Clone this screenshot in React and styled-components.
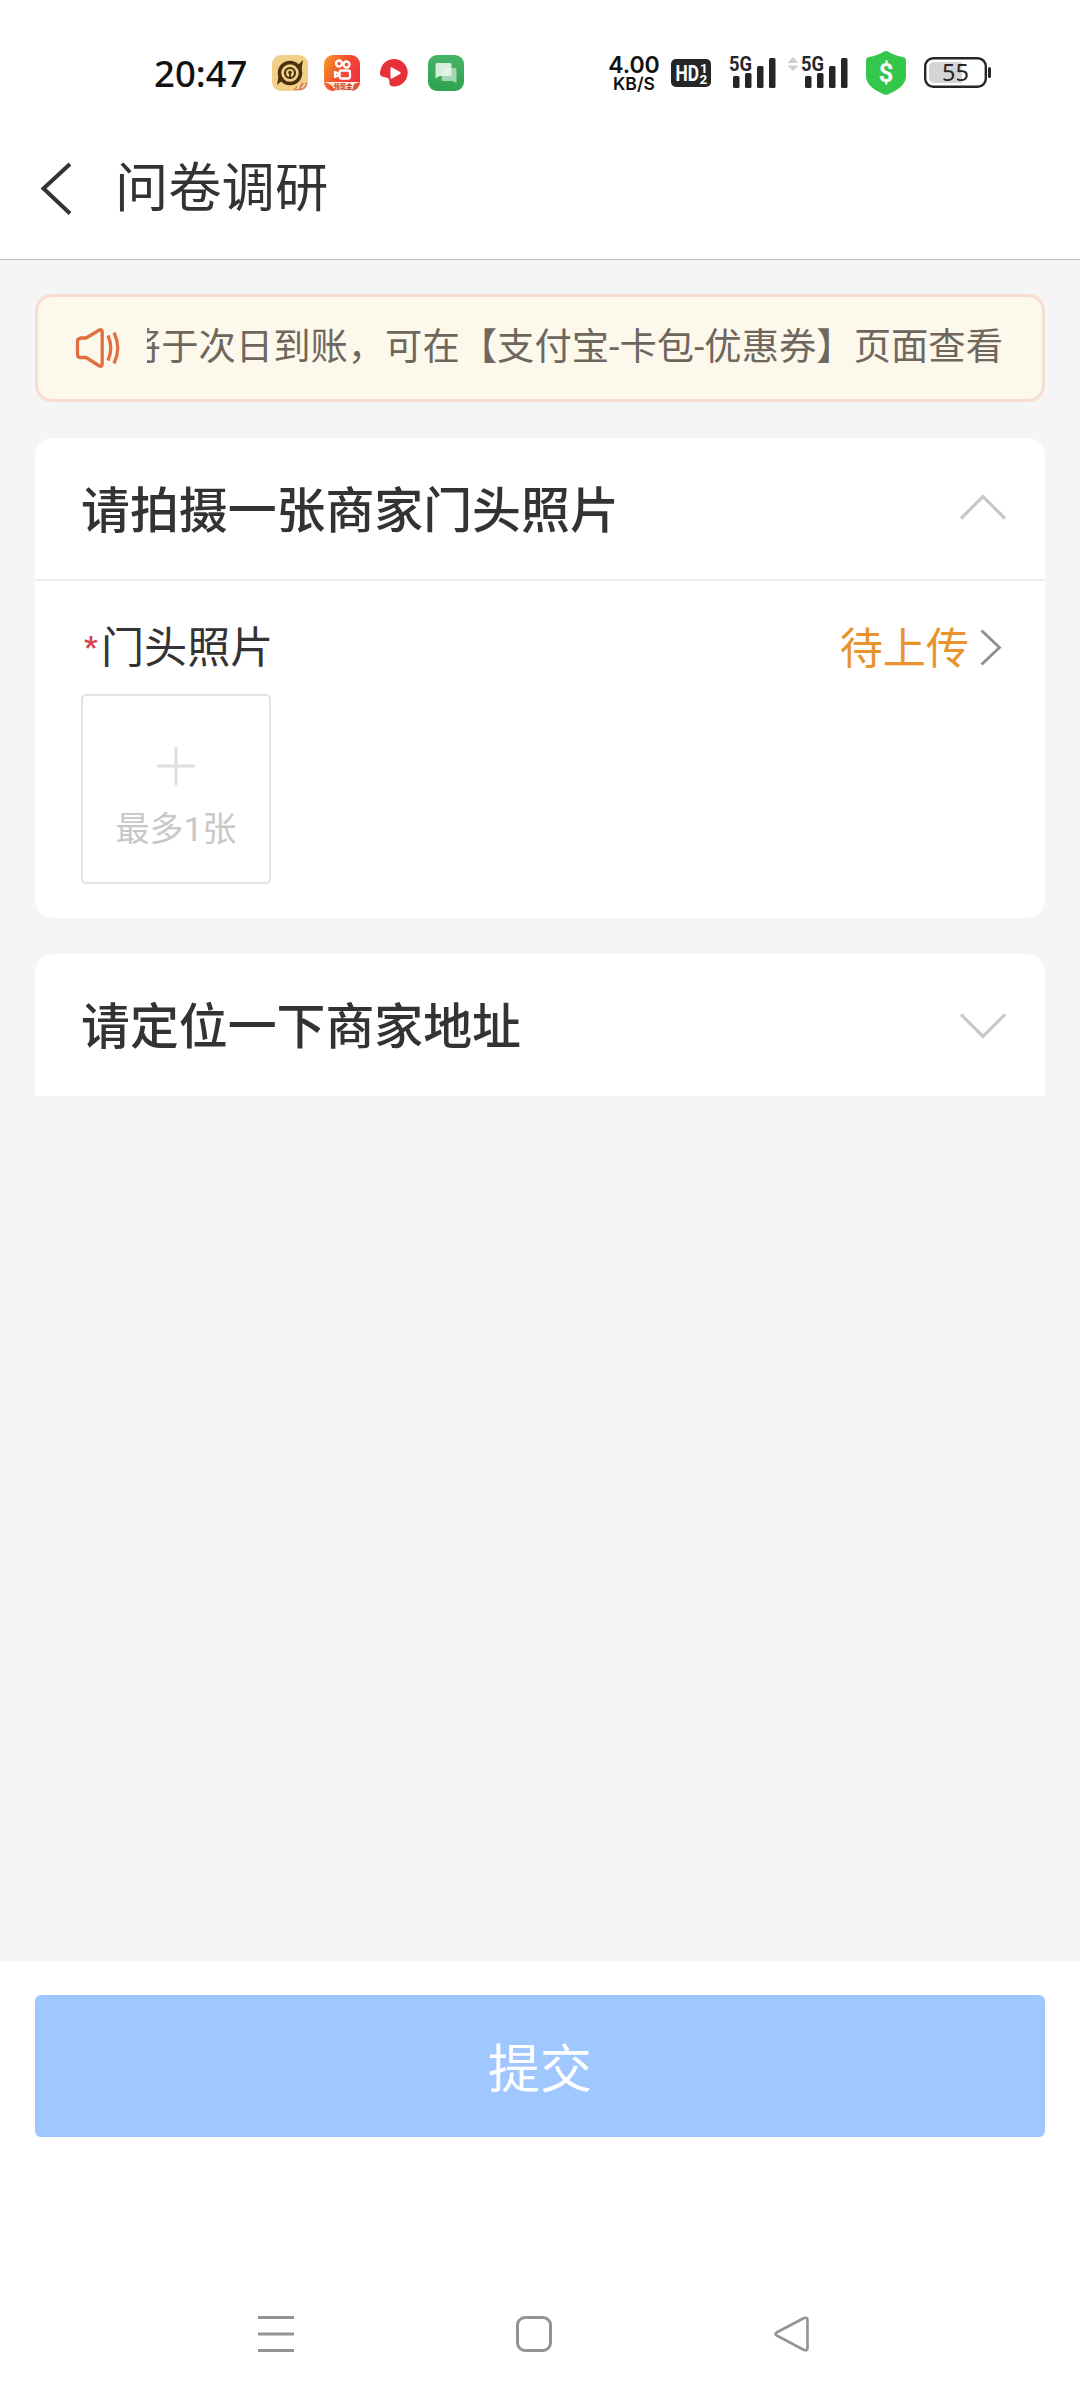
import React from "react";
import styled, { createGlobalStyle } from "styled-components";

const GlobalStyle = createGlobalStyle`
  * {
    box-sizing: border-box;
  }
  body {
    margin: 0;
    background: #fff;
    font-family: Roboto, "Noto Sans CJK SC", sans-serif;
    color: #333;
  }
  svg {
    display: block;
    flex-shrink: 0;
    overflow: visible;
  }
`;

const Page = styled.div`
  display: flex;
  flex-direction: column;
  width: 1080px;
  height: 2400px;
  background: #fff;
  overflow: hidden;
`;

const StatusBar = styled.div`
  display: flex;
  align-items: center;
  height: 120px;
  padding: 25px 89px 0 154px;
`;

const Clock = styled.div`
  width: 118px;
  padding-top: 1px;
  font: 500 36.5px/50px "Noto Sans", sans-serif;
  color: #111;
  white-space: nowrap;
`;

const AppIcons = styled.div`
  display: flex;
  align-items: center;
  gap: 16px;
`;

const StatusRight = styled.div`
  display: flex;
  align-items: center;
  margin-left: auto;
`;

const Spacer = styled.div`
  width: ${(p) => p.$w}px;
`;

const NetSpeed = styled.div`
  width: 54px;
  margin-right: 10px;
  padding-top: 3px;
  text-align: center;
  font-family: Inter, sans-serif;
  font-weight: 600;
  color: #111;
  white-space: nowrap;
`;

const SpeedValue = styled.div`
  font-size: 23px;
  line-height: 20px;
`;

const SpeedUnit = styled.div`
  font-size: 17.5px;
  line-height: 18px;
`;

const Header = styled.header`
  display: flex;
  align-items: center;
  height: 140px;
  padding: 0 40px 2px;
  border-bottom: 1px solid #bdbdbd;
`;

const Title = styled.h1`
  margin: 1px 0 0 43px;
  font-size: 53.3px;
  font-weight: 400;
  line-height: 60px;
`;

const Main = styled.main`
  display: flex;
  flex-direction: column;
  height: 1701px;
  padding: 34px 35px 0;
  background: #f5f5f5;
`;

const Notice = styled.div`
  display: flex;
  align-items: center;
  height: 108px;
  padding: 0 39px 2px 37px;
  border: 3px solid #f6ddcd;
  border-radius: 17px;
  background: #fdf8ec;
`;

const NoticeText = styled.div`
  display: flex;
  justify-content: flex-end;
  flex: 1;
  margin-left: 26px;
  overflow: hidden;
  font-size: 37.35px;
  line-height: 56px;
  color: #6f675d;
  white-space: nowrap;
`;

const Card = styled.section`
  margin-top: 36px;
  border-radius: ${(p) => (p.$open ? "18px" : "18px 18px 0 0")};
  background: #fff;
`;

const CardHeader = styled.div`
  display: flex;
  align-items: center;
  justify-content: space-between;
  height: ${(p) => (p.$open ? "143px" : "142px")};
  padding: 0 39px ${(p) => (p.$open ? "4px" : "0")} 46px;
  border-bottom: ${(p) => (p.$open ? "2px solid #ececec" : "none")};
`;

const CardTitle = styled.h2`
  margin: 0;
  padding-top: ${(p) => (p.$open ? "10px" : "6px")};
  font-size: 48.9px;
  font-weight: 500;
  line-height: 60px;
`;

const CardBody = styled.div`
  height: 337px;
  padding: 37px 43px 0 46px;
`;

const Field = styled.div`
  display: flex;
  align-items: center;
  justify-content: space-between;
  height: 60px;
`;

const Label = styled.div`
  display: flex;
  align-items: center;
  padding-top: 2px;
  font-size: 43.1px;
  line-height: 60px;
`;

const Required = styled.span`
  width: 20px;
  height: 62px;
  padding-left: 3px;
  font-size: 30px;
  font-weight: 700;
  line-height: 58px;
  color: #d9434f;
`;

const Status = styled.div`
  display: flex;
  align-items: center;
  gap: 11px;
  font-size: 43.1px;
  line-height: 60px;
  color: #e8932c;
`;

const StatusLabel = styled.span`
  padding-top: 3px;
`;

const Upload = styled.button`
  display: flex;
  flex-direction: column;
  align-items: center;
  gap: 19px;
  width: 190px;
  height: 190px;
  margin-top: 16px;
  padding: 51px 0 0;
  border: 2px solid #e3e3e3;
  border-radius: 5px;
  background: #fff;
  font-family: inherit;
  font-size: 34px;
  line-height: 50px;
  color: #c8c8c8;
  white-space: nowrap;
`;

const Footer = styled.footer`
  padding: 34px 35px 0;
`;

const Submit = styled.button`
  display: block;
  width: 100%;
  height: 142px;
  padding: 9px 0 0;
  border: none;
  border-radius: 6px;
  background: #a0c7ff;
  font-family: inherit;
  font-size: 52px;
  line-height: 60px;
  color: #fff;
`;

const NavBar = styled.nav`
  display: flex;
  justify-content: space-between;
  margin-top: auto;
  padding: 0 269px 47px 257px;
`;

const RadioIcon = () => (
  <svg width="36" height="36" viewBox="0 0 36 36">
    <rect width="36" height="36" rx="9" fill="#f2cf86" />
    <circle cx="18" cy="18" r="10.5" fill="none" stroke="#4a3010" strokeWidth="3.5" />
    <path d="M31 5l-2 12-5-5zM5 30l2-11 5 5z" fill="#4a3010" />
    <circle cx="18" cy="18" r="5" fill="none" stroke="#4a3010" strokeWidth="2.2" />
    <circle cx="18" cy="17.500" r="1.800" fill="#4a3010" />
    <path d="M18 18v6" stroke="#4a3010" strokeWidth="1.800" />
    <path d="M21 35l4-4 2 2 3-6 2 2 3-2v3a7 7 0 0 1-6 5z" fill="#d98a62" />
    <path d="M25 34l2-2m3 1l3-4" stroke="#fff2d8" strokeWidth="1.200" />
  </svg>
);

const CameraIcon = () => (
  <svg width="36" height="36" viewBox="0 0 36 36">
    <defs>
      <linearGradient id="camBg" x1="0" y1="0" x2="1" y2=".5">
        <stop offset="0" stopColor="#f79a2b" />
        <stop offset=".55" stopColor="#f4502c" />
        <stop offset="1" stopColor="#ef3340" />
      </linearGradient>
      <clipPath id="camClip">
        <rect width="36" height="36" rx="9" />
      </clipPath>
    </defs>
    <g clipPath="url(#camClip)">
      <rect width="36" height="36" fill="url(#camBg)" />
      <g fill="none" stroke="#fff" strokeWidth="2.300">
        <circle cx="15" cy="8.500" r="3" />
        <circle cx="22.500" cy="9.500" r="3" />
        <rect x="15.500" y="15.500" width="10.500" height="8" rx="2" />
        <path d="M15.500 19.500l-4.500-2.500v5z" strokeLinejoin="round" />
      </g>
      <path d="M0 27h36v9H11Q9 29 0 27z" fill="#fff0e4" />
      <path d="M28 36l2-7 6-2v9z" fill="#e2553c" />
      <text x="9.500" y="34" fontSize="6.300" fontWeight="700" fill="#c33426" fontFamily="Noto Sans CJK SC">
        领现金
      </text>
    </g>
  </svg>
);

const PlayIcon = () => (
  <svg width="36" height="36" viewBox="0 0 36 36">
    <path
      d="M4 18C4.500 9.500 10.500 4 18 4a13.700 13.700 0 0 1 0 27.400c-3.500 0-5-1.400-4.600-4.400.4-3-1-4.300-4.400-4.700C5.500 22 3.900 20.500 4 18z"
      fill="#e8303a"
    />
    <path d="M14.500 13.500q0-1.800 1.600-1l8 4.500q1.400 1 0 2l-8 4.500q-1.600.8-1.600-1z" fill="#fff" />
  </svg>
);

const ChatIcon = () => (
  <svg width="36" height="36" viewBox="0 0 36 36">
    <defs>
      <linearGradient id="chatBg" x1="0" y1="0" x2="0" y2="1">
        <stop offset="0" stopColor="#45b368" />
        <stop offset="1" stopColor="#2fa24f" />
      </linearGradient>
    </defs>
    <rect width="36" height="36" rx="9" fill="url(#chatBg)" />
    <path d="M15 13h12a1.500 1.500 0 0 1 1.500 1.500V28l-4-2H15a1.500 1.500 0 0 1-1.500-1.500z" fill="#a5d8b2" />
    <path d="M9 8h13a1.500 1.500 0 0 1 1.500 1.500v10A1.500 1.500 0 0 1 22 21H11.500l-4 2.500v-14A1.500 1.500 0 0 1 9 8z" fill="#e9f5eb" opacity=".9" />
  </svg>
);

const HdIcon = () => (
  <svg width="40" height="28" viewBox="0 0 40 28">
    <rect width="40" height="28" rx="5" fill="#262626" />
    <text x="4.500" y="22" fontSize="22" fontWeight="700" fill="#fff" fontFamily="Roboto" textLength="23.500" lengthAdjust="spacingAndGlyphs">
      HD
    </text>
    <text x="29" y="13.500" fontSize="13.500" fontWeight="700" fill="#fff" fontFamily="Roboto">
      1
    </text>
    <text x="28.500" y="25" fontSize="13.500" fontWeight="700" fill="#fff" fontFamily="Roboto">
      2
    </text>
  </svg>
);

const SignalIcon = () => (
  <svg width="48" height="36" viewBox="0 0 48 36">
    <text x="0" y="16" fontSize="21" fontWeight="700" fill="#262626" fontFamily="Roboto" textLength="23" lengthAdjust="spacingAndGlyphs">
      5G
    </text>
    <g fill="#262626">
      <rect x="4" y="21" width="6.500" height="12" rx="1.500" />
      <rect x="16" y="18" width="6.500" height="15" rx="1.500" />
      <rect x="28" y="11" width="6.500" height="22" rx="1.500" />
      <rect x="40" y="3" width="6.500" height="30" rx="1.500" />
    </g>
  </svg>
);

const DataArrows = () => (
  <svg width="14" height="36" viewBox="0 0 14 36">
    <path d="M2.500 7.500L7 2.500l4.500 5zM2.500 11l4.500 4.500 4.500-4.500z" fill="#cfcfcf" stroke="#cfcfcf" strokeLinejoin="round" />
  </svg>
);

const ShieldIcon = () => (
  <svg width="40" height="44" viewBox="0 0 40 44">
    <path d="M20 0q1 0 2 .6Q29 5 37 6q3 .5 3 3.500V25q0 11-18 18.400-2 .8-4 0Q0 36 0 25V9.500Q0 6.500 3 6 11 5 18 .6 19 0 20 0z" fill="#34c74b" />
    <text x="20" y="31" fontSize="26" fontWeight="700" fill="#fff" fontFamily="Roboto" textAnchor="middle">
      $
    </text>
  </svg>
);

const BatteryIcon = () => (
  <svg width="67" height="31" viewBox="0 0 67 31">
    <rect x="1.200" y="1.200" width="60.600" height="28.600" rx="8" fill="#fff" stroke="#262626" strokeWidth="2.400" />
    <path d="M10 5h28v21H10a5 5 0 0 1-5-5V10a5 5 0 0 1 5-5z" fill="#d5d5d5" />
    <rect x="64" y="10" width="3" height="11" rx="1.500" fill="#262626" />
    <text x="31.500" y="24" fontSize="23.500" fill="#262626" fontFamily="Noto Sans" textAnchor="middle">
      55
    </text>
  </svg>
);

const BackIcon = () => (
  <svg width="32" height="54" viewBox="0 0 32 54">
    <path d="M30 2L3.500 26.500 30 51.500" fill="none" stroke="#333" strokeWidth="4" />
  </svg>
);

const SpeakerIcon = () => (
  <svg width="46" height="42" viewBox="0 0 46 42" fill="none" stroke="#e0703f" strokeWidth="3.300">
    <path
      d="M5.500 12H11L24.500 4q2.700-1 2.700 2v32q0 3-2.700 2L11 31.500H5.500q-3 0-3-3v-13q0-3 3-3z"
      strokeLinejoin="round"
    />
    <path d="M33 9.500q5.500 12.500 0 25" />
    <path d="M39 6.500q7.500 15.500 0 31" />
  </svg>
);

const FoldIcon = ({ up }) => (
  <svg width="46" height="26" viewBox="0 0 46 26">
    <path d={up ? "M1 24.500L23 2.500l22 22" : "M1 2.500l22 22 22-22"} fill="none" stroke="#c8c8c8" strokeWidth="3.200" />
  </svg>
);

const ArrowIcon = () => (
  <svg width="22" height="36" viewBox="0 0 22 36">
    <path d="M1.500 .5L19.500 17.500l-18 17" fill="none" stroke="#8f8f8f" strokeWidth="2.800" />
  </svg>
);

const PlusIcon = () => (
  <svg width="38" height="38" viewBox="0 0 38 38">
    <path d="M19 0v38M0 19h38" stroke="#dedede" strokeWidth="3" />
  </svg>
);

const App = () => {
  return (
    <Page>
      <GlobalStyle />
      <StatusBar>
        <Clock>20:47</Clock>
        <AppIcons>
          <RadioIcon />
          <CameraIcon />
          <PlayIcon />
          <ChatIcon />
        </AppIcons>
        <StatusRight>
          <NetSpeed>
            <SpeedValue>4.00</SpeedValue>
            <SpeedUnit>KB/S</SpeedUnit>
          </NetSpeed>
          <HdIcon />
          <Spacer $w={18} />
          <SignalIcon />
          <Spacer $w={9} />
          <DataArrows />
          <Spacer $w={1} />
          <SignalIcon />
          <Spacer $w={17} />
          <ShieldIcon />
          <Spacer $w={18} />
          <BatteryIcon />
        </StatusRight>
      </StatusBar>

      <Header>
        <BackIcon />
        <Title>问卷调研</Title>
      </Header>

      <Main>
        <Notice>
          <SpeakerIcon />
          <NoticeText>
            <span>将于次日到账，可在【支付宝-卡包-优惠券】页面查看</span>
          </NoticeText>
        </Notice>

        <Card $open>
          <CardHeader $open>
            <CardTitle $open>请拍摄一张商家门头照片</CardTitle>
            <FoldIcon up />
          </CardHeader>
          <CardBody>
            <Field>
              <Label>
                <Required>*</Required>
                门头照片
              </Label>
              <Status>
                <StatusLabel>待上传</StatusLabel>
                <ArrowIcon />
              </Status>
            </Field>
            <Upload>
              <PlusIcon />
              最多1张
            </Upload>
          </CardBody>
        </Card>

        <Card>
          <CardHeader>
            <CardTitle>请定位一下商家地址</CardTitle>
            <FoldIcon />
          </CardHeader>
        </Card>
      </Main>

      <Footer>
        <Submit>提交</Submit>
      </Footer>

      <NavBar>
        <svg width="38" height="38" viewBox="0 0 38 38">
          <path d="M1 2.500h36M1 19h36M1 35.500h36" stroke="#939393" strokeWidth="3" />
        </svg>
        <svg width="38" height="38" viewBox="0 0 38 38">
          <rect x="2.500" y="2.500" width="33" height="33" rx="7.500" fill="none" stroke="#939393" strokeWidth="3" />
        </svg>
        <svg width="38" height="38" viewBox="0 0 38 38">
          <path
            d="M3.500 17.500L31 3q3.500-1 3.500 2v28q0 3-3.500 2L3.500 20.500q-2-1.500 0-3z"
            fill="none"
            stroke="#939393"
            strokeWidth="2.600"
          />
        </svg>
      </NavBar>
    </Page>
  );
};

export default App;
